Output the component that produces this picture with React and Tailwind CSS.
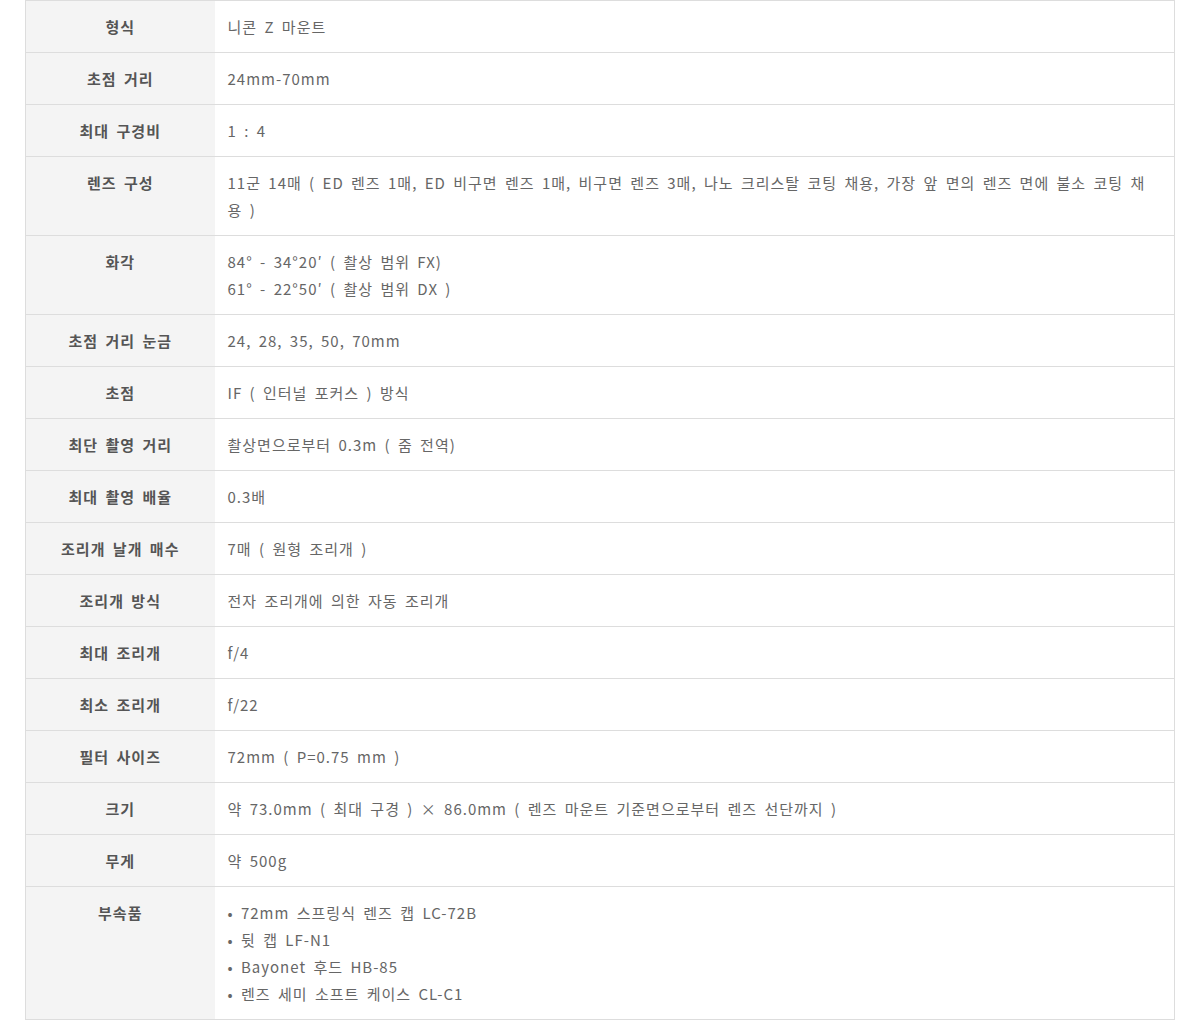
const specs = [
  { label: "형식", value: ["니콘 Z 마운트"] },
  { label: "초점 거리", value: ["24mm-70mm"] },
  { label: "최대 구경비", value: ["1 : 4"] },
  {
    label: "렌즈 구성",
    value: [
      "11군 14매 ( ED 렌즈 1매, ED 비구면 렌즈 1매, 비구면 렌즈 3매, 나노 크리스탈 코팅 채용, 가장 앞 면의 렌즈 면에 불소 코팅 채용 )",
    ],
  },
  {
    label: "화각",
    value: ["84° - 34°20′ ( 촬상 범위 FX)", "61° - 22°50′ ( 촬상 범위 DX )"],
  },
  { label: "초점 거리 눈금", value: ["24, 28, 35, 50, 70mm"] },
  { label: "초점", value: ["IF ( 인터널 포커스 ) 방식"] },
  { label: "최단 촬영 거리", value: ["촬상면으로부터 0.3m ( 줌 전역)"] },
  { label: "최대 촬영 배율", value: ["0.3배"] },
  { label: "조리개 날개 매수", value: ["7매 ( 원형 조리개 )"] },
  { label: "조리개 방식", value: ["전자 조리개에 의한 자동 조리개"] },
  { label: "최대 조리개", value: ["f/4"] },
  { label: "최소 조리개", value: ["f/22"] },
  { label: "필터 사이즈", value: ["72mm ( P=0.75 mm )"] },
  {
    label: "크기",
    value: ["약 73.0mm ( 최대 구경 ) × 86.0mm ( 렌즈 마운트 기준면으로부터 렌즈 선단까지 )"],
  },
  { label: "무게", value: ["약 500g"] },
];

const accessories = [
  "72mm 스프링식 렌즈 캡 LC-72B",
  "뒷 캡 LF-N1",
  "Bayonet 후드 HB-85",
  "렌즈 세미 소프트 케이스 CL-C1",
];

function Row({ label, children }) {
  return (
    <tr className="border-b border-[#dddddd]">
      <th className="w-[189px] bg-[#f4f4f4] pt-[12px] pb-[12px] px-2 align-top text-center text-[15px] leading-[27px] font-bold text-[#555]">
        {label}
      </th>
      <td className="pt-[12px] pb-[12px] pl-[13px] pr-[18px] align-top text-[15px] leading-[27px] text-[#666]">
        {children}
      </td>
    </tr>
  );
}

export default function App() {
  return (
    <div
      className="bg-white px-[25px]"
      style={{ fontFamily: '"Noto Sans CJK KR", "Noto Sans", sans-serif' }}
    >
      <table className="w-[1150px] border-collapse border border-[#dddddd] tracking-[1px] [word-spacing:3px]">
        <tbody>
          {specs.map((s) => (
            <Row key={s.label} label={s.label}>
              {s.value.map((v) => (
                <div key={v}>{v}</div>
              ))}
            </Row>
          ))}
          <Row label="부속품">
            <ul>
              {accessories.map((a) => (
                <li key={a}>• {a}</li>
              ))}
            </ul>
          </Row>
        </tbody>
      </table>
    </div>
  );
}
